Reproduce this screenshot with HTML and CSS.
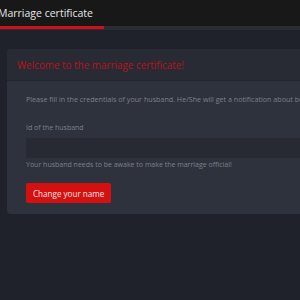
FILE: index.html
```html
<!DOCTYPE html>
<html lang="en">
<head>
    <meta charset="UTF-8">
    <meta name="viewport" content="width=device-width, initial-scale=1.0">
    <title>Marriage certificate</title>
    <link rel="stylesheet" href="styles.css">
</head>
<body>
    <!-- Top bar with the page title -->
    <div class="topbar">
        <div class="topbar-title">Marriage certificate</div>
    </div>
    <div class="tabline"><div class="tabline-active"></div></div>

    <!-- Main card -->
    <div class="card">
        <div class="card-header">Welcome to the marriage certificate!</div>
        <div class="card-body">
            <p class="intro">Please fill in the credentials of your husband. He/She will get a notification about both of you</p>
            <label class="field-label" for="husband">Id of the husband</label>
            <input class="field-input" id="husband" type="text">
            <p class="hint">Your husband needs to be awake to make the marriage official!</p>
            <button class="btn-red">Change your name</button>
        </div>
    </div>
</body>
</html>
```

FILE: styles.css
```css
/* Global page styling */
body {
    margin: 0;
    width: 300px;
    height: 300px;
    overflow: hidden;
    background-color: #1f222a;
    font-family: "Open Sans", "Noto Sans", sans-serif;
}

/* Top bar */
.topbar {
    height: 26px;
    background-color: #181818;
    display: flex;
    align-items: center;
}
.topbar-title {
    margin-left: -2px;
    color: #e6e6e6;
    font-size: 10.5px;
}

/* line under the top bar with the red active part */
.tabline {
    height: 4px;
    background-color: #2c2d31;
}
.tabline-active {
    width: 104px;
    height: 3px;
    background-color: #d0101c;
}

/* Card */
.card {
    width: 330px;
    margin: 19px 0 0 7px;
    background-color: #2e323c;
    border-radius: 4px;
    overflow: hidden;
}
.card-header {
    height: 31px;
    padding-left: 10px;
    display: flex;
    align-items: center;
    background-color: #282b33;
    border-bottom: 1px solid #22252c;
    color: #b8121e;
    font-size: 9.9px;
    white-space: nowrap;
}
.card-body {
    padding: 13px 0 11px 19px;
    display: flex;
    flex-direction: column;
    align-items: flex-start;
    color: #7c808a;
    font-size: 7px;
}
.intro {
    margin: 0 0 19px 0;
    font-size: 7.15px;
    white-space: nowrap;
}
.field-label {
    margin-bottom: 6px;
}
.field-input {
    width: 100%;
    height: 20px;
    box-sizing: border-box;
    border: none;
    background-color: #272a32;
    margin: 0;
}
.hint {
    margin: 1px 0 12px 0;
    line-height: 12px;
}

/* Red button */
.btn-red {
    height: 20px;
    padding: 0 7px;
    border: none;
    border-radius: 2px;
    background-color: #d41010;
    color: #f4e6e6;
    font-family: "Open Sans", "Noto Sans", sans-serif;
    font-size: 8.1px;
}
```
